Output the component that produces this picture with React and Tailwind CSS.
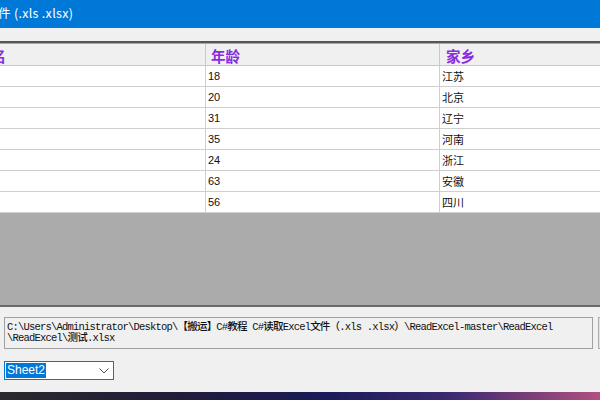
import React from "react";

const rows = [
  ["18", "江苏"],
  ["20", "北京"],
  ["31", "辽宁"],
  ["35", "河南"],
  ["24", "浙江"],
  ["63", "安徽"],
  ["56", "四川"],
];

const cjk = { fontFamily: '"Noto Sans CJK SC", "Liberation Sans", sans-serif' };
const mono = { fontFamily: '"Liberation Mono", "Noto Sans CJK SC", monospace' };

const App = () => {
  return (
    <div className="w-[600px] h-[400px] overflow-hidden bg-[#f0f0f0] flex flex-col" style={cjk}>
      {/* title bar */}
      <div className="h-[28px] bg-[#0078d7] flex items-center text-white text-[12.5px] pb-[1px] shrink-0">
        <span className="-ml-[2px] tracking-[0.3px]">件 (.xls .xlsx)</span>
      </div>
      <div className="h-[13px] bg-[#f0f0f0] shrink-0" />

      {/* grid */}
      <div className="border-t-2 border-[#555] shrink-0">
        <div className="border-t border-[#a8a8a8] -ml-[28px] w-[700px]">
          <div className="flex h-[22px] bg-[#f0f0f0] border-b border-[#c8c8c8] text-[#8a2be2] font-bold text-[14.5px]">
            <div className="w-[234px] border-r border-[#c8c8c8] pl-[5px] flex items-center pt-[2px]">姓名</div>
            <div className="w-[234px] border-r border-[#c8c8c8] pl-[5px] flex items-center pt-[2px]">年龄</div>
            <div className="flex-1 pl-[6px] flex items-center pt-[2px]">家乡</div>
          </div>
          {rows.map((r, i) => (
            <div key={i} className="flex h-[21px] bg-white border-b border-[#cfcfcf] text-[11px] text-[#111]">
              <div className="w-[234px] border-r border-[#cfcfcf]" />
              <div className="w-[234px] border-r border-[#cfcfcf] pl-[2px] flex items-center" style={{ fontFamily: '"Liberation Sans", sans-serif' }}>
                {r[0]}
              </div>
              <div className="flex-1 pl-[2px] flex items-center">{r[1]}</div>
            </div>
          ))}
        </div>
      </div>
      <div className="h-[94px] bg-[#ababab] border-b-2 border-[#6a6a6a] shrink-0" />

      {/* bottom panel */}
      <div className="flex-1 flex flex-col pl-[4px] pt-[10px]">
        <div className="flex gap-[5px]">
          <div className="w-[589px] h-[32px] shrink-0 border border-[#a0a0a0] bg-[#f0f0f0] px-[2px] pt-[4px] text-[10.5px] leading-[11px] text-[#111] font-medium tracking-[-0.8px] whitespace-pre" style={mono}>
            <div>C:\Users\Administrator\Desktop\【搬运】C#教程 C#读取Excel文件（.xls .xlsx）\ReadExcel-master\ReadExcel</div>
            <div>\ReadExcel\测试.xlsx</div>
          </div>
          <div className="w-[20px] h-[32px] border border-[#adadad] bg-[#e1e1e1] shrink-0" />
        </div>
        <div className="mt-[12px] w-[110px] h-[19px] border border-[#0078d7] bg-white flex items-center pl-[1px] pr-[4px]">
          <span className="bg-[#0078d7] text-white text-[12px] leading-[15px] px-[1px]" style={{ fontFamily: '"Liberation Sans", sans-serif' }}>
            Sheet2
          </span>
          <div className="flex-1" />
          <svg width="10" height="6" viewBox="0 0 10 6" fill="none" stroke="#555" strokeWidth="1">
            <path d="M0.5 0.5 L5 5 L9.5 0.5" />
          </svg>
        </div>
        <div className="flex-1" />
        <div className="h-[8px] -ml-[4px] bg-[linear-gradient(90deg,#2a2a2e_0%,#1f1c3a_30%,#1c1a5a_55%,#3a2a70_75%,#b05080_100%)]" />
      </div>
    </div>
  );
};

export default App;
